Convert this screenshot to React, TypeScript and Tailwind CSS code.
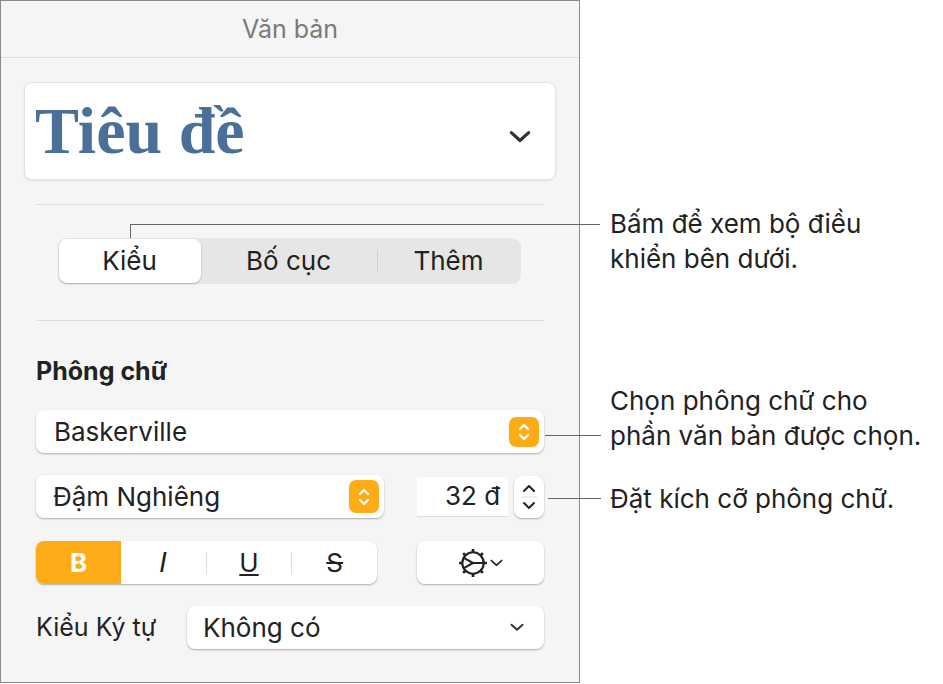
import React from 'react';

const sans = { fontFamily: 'Inter, "Noto Sans", sans-serif' };

function Updown() {
    return (
        <svg width="14" height="22" viewBox="0 0 14 22" fill="none" stroke="white" strokeWidth="2.2" strokeLinecap="round" strokeLinejoin="round">
            <path d="M3 8l4-4 4 4M3 14l4 4 4-4" />
        </svg>
    );
}

function Chevron({ size = 14 }: { size?: number }) {
    return (
        <svg width={size} height={size * 0.6} viewBox="0 0 14 8" fill="none" stroke="#333" strokeWidth="2" strokeLinecap="round" strokeLinejoin="round">
            <path d="M1.5 1.5l5.5 5 5.5-5" />
        </svg>
    );
}

export default function App() {
    return (
        <div className="relative h-[684px] w-[943px] bg-white text-[#222]" style={sans}>
            <div className="flex h-[683px] w-[580px] flex-col border border-[#8a8a8a] bg-[#f5f5f5]">
                <div className="flex h-[57px] items-center justify-center border-b border-[#dcdcdc] text-[25px] leading-none text-[#7a7a7a]">
                    Văn bản
                </div>
                <div className="px-[23px] pt-[24px]">
                    <div className="flex h-[98px] items-center justify-between rounded-[8px] border border-[#e2e2e2] bg-white pl-[10px] pr-[24px] shadow-[0_1px_2px_rgba(0,0,0,0.08)]">
                        <span className="text-[66px] font-bold leading-none text-[#4a6f98]" style={{ fontFamily: '"Liberation Serif", "DejaVu Serif", serif' }}>Tiêu đề</span>
                        <span className="mt-[12px]"><Chevron size={22} /></span>
                    </div>
                </div>
                <div className="mx-[35px] mt-[24px] h-px bg-[#dcdcdc]" />
                <div className="mt-[33px] flex justify-center">
                    <div className="ml-[-2px] flex h-[46px] w-[463px] items-center rounded-[9px] bg-[#e6e6e6] p-[1px] text-[26px] leading-none">
                        <div className="flex h-full w-[142px] items-center justify-center rounded-[8px] bg-white shadow-[0_1px_2px_rgba(0,0,0,0.25)]">Kiểu</div>
                        <div className="flex flex-1 items-center justify-center">Bố cục</div>
                        <div className="h-[22px] w-px bg-[#cfcfcf]" />
                        <div className="flex w-[142px] items-center justify-center">Thêm</div>
                    </div>
                </div>
                <div className="mx-[35px] mt-[36px] h-px bg-[#dcdcdc]" />
                <div className="px-[35px]">
                    <div className="mt-[38px] text-[25px] font-bold leading-none">Phông chữ</div>
                    <div className="mt-[26px] flex h-[43px] items-center justify-between rounded-[8px] bg-white pl-[18px] pr-[5px] text-[26px] leading-none shadow-[0_1px_2px_rgba(0,0,0,0.3)]">
                        Baskerville
                        <span className="flex h-[30px] w-[30px] items-center justify-center rounded-[7px] bg-[#fdac17]"><Updown /></span>
                    </div>
                    <div className="mt-[22px] flex items-center">
                        <div className="flex h-[43px] w-[349px] items-center justify-between rounded-[8px] bg-white pl-[17px] pr-[5px] text-[26px] leading-none shadow-[0_1px_2px_rgba(0,0,0,0.3)]">
                            Đậm Nghiêng
                            <span className="flex h-[33px] w-[30px] items-center justify-center rounded-[7px] bg-[#fdac17]"><Updown /></span>
                        </div>
                        <div className="ml-[33px] flex h-[40px] w-[91px] items-center justify-end border-b border-[#ddd] bg-white pr-[8px] text-[26px] leading-none">32 đ</div>
                        <div className="ml-[6px] flex h-[42px] w-[30px] flex-col items-center justify-center rounded-[8px] bg-white shadow-[0_1px_2px_rgba(0,0,0,0.3)]">
                            <svg width="16" height="34" viewBox="0 0 16 34" fill="none" stroke="#222" strokeWidth="2" strokeLinecap="round" strokeLinejoin="round">
                                <path d="M3 11l5-5 5 5M3 23l5 5 5-5" />
                                <path d="M0 17h16" stroke="#ddd" strokeWidth="1" />
                            </svg>
                        </div>
                    </div>
                    <div className="mt-[23px] flex items-center">
                        <div className="flex h-[43px] w-[341px] items-center overflow-hidden rounded-[8px] bg-white text-[26px] leading-none shadow-[0_1px_2px_rgba(0,0,0,0.3)]">
                            <div className="flex h-full w-[85px] items-center justify-center bg-[#fdac17] font-bold text-white">B</div>
                            <div className="flex flex-1 items-center justify-center italic" style={{ fontFamily: '"DejaVu Sans", sans-serif' }}>I</div>
                            <div className="h-[22px] w-px bg-[#ddd]" />
                            <div className="flex flex-1 items-center justify-center underline">U</div>
                            <div className="h-[22px] w-px bg-[#ddd]" />
                            <div className="flex flex-1 items-center justify-center line-through">S</div>
                        </div>
                        <div className="ml-[40px] flex h-[43px] flex-1 items-center justify-center gap-[2px] rounded-[8px] bg-white shadow-[0_1px_2px_rgba(0,0,0,0.3)]">
                            <svg width="30" height="30" viewBox="0 0 28 28" fill="none" stroke="#222" strokeWidth="2">
                                <circle cx="14" cy="14" r="10" />
                                <path d="M5 9l9 5-9 5M14 14h10" />
                                <g strokeWidth="2.5">
                                    <path d="M14 1v3M14 24v3M1 14h3M24 14h3M4.8 4.8l2 2M21.2 21.2l2 2M4.8 23.2l2-2M21.2 6.8l2-2" />
                                </g>
                            </svg>
                            <Chevron size={13} />
                        </div>
                    </div>
                    <div className="mt-[22px] flex items-center">
                        <span className="w-[151px] text-[25px] leading-none">Kiểu Ký tự</span>
                        <div className="flex h-[43px] flex-1 items-center justify-between rounded-[8px] bg-white pl-[16px] pr-[20px] text-[26px] leading-none shadow-[0_1px_2px_rgba(0,0,0,0.3)]">
                            Không có
                            <Chevron size={14} />
                        </div>
                    </div>
                </div>
            </div>

            {/* callouts */}
            <div className="absolute left-[130px] top-[224px] h-[14px] w-[470px] border-l border-t border-[#666]" />
            <div className="absolute left-[545px] top-[435px] h-px w-[56px] bg-[#666]" />
            <div className="absolute left-[548px] top-[498px] h-px w-[53px] bg-[#666]" />
            <div className="absolute left-[610px] top-[206px] text-[26px] leading-[35px]">Bấm để xem bộ điều<br />khiển bên dưới.</div>
            <div className="absolute left-[610px] top-[383px] text-[26px] leading-[35px]">Chọn phông chữ cho<br />phần văn bản được chọn.</div>
            <div className="absolute left-[610px] top-[481px] text-[26px] leading-[35px]">Đặt kích cỡ phông chữ.</div>
        </div>
    );
}
